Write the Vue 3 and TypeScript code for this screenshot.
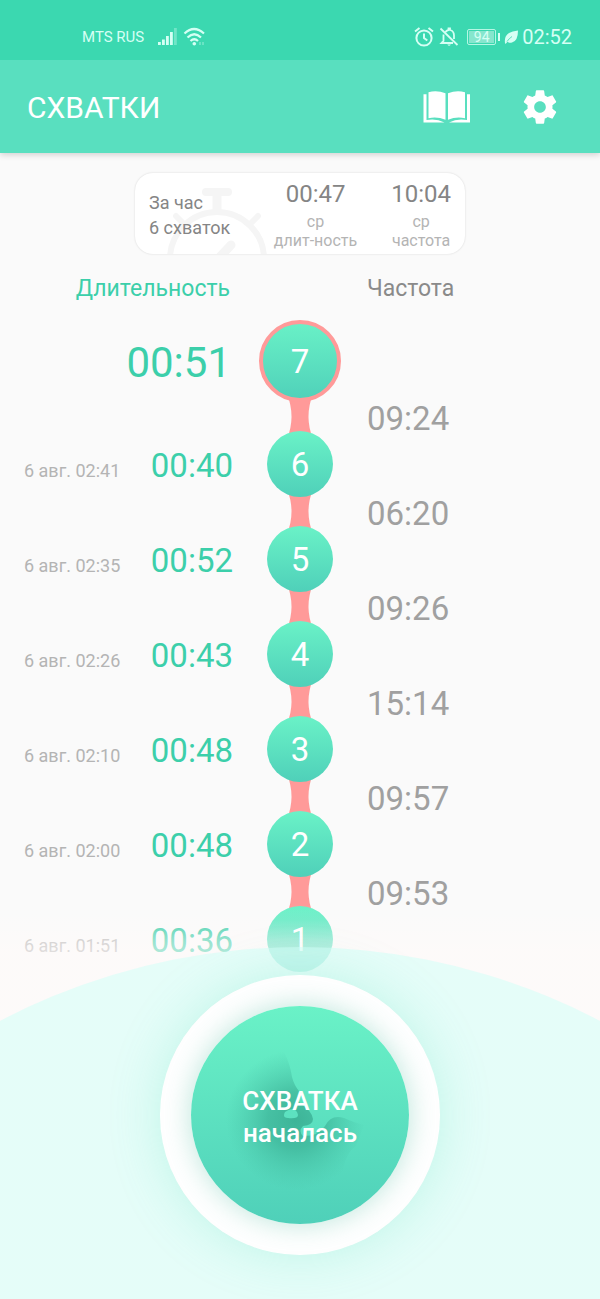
<script setup lang="ts">
interface Contraction {
  id: number
  duration: string
  startedAt?: string
  interval?: string
}

const contractions: Contraction[] = [
  { id: 7, duration: '00:51', interval: '09:24' },
  { id: 6, duration: '00:40', startedAt: '6 авг. 02:41', interval: '06:20' },
  { id: 5, duration: '00:52', startedAt: '6 авг. 02:35', interval: '09:26' },
  { id: 4, duration: '00:43', startedAt: '6 авг. 02:26', interval: '15:14' },
  { id: 3, duration: '00:48', startedAt: '6 авг. 02:10', interval: '09:57' },
  { id: 2, duration: '00:48', startedAt: '6 авг. 02:00', interval: '09:53' },
  { id: 1, duration: '00:36', startedAt: '6 авг. 01:51' },
]
</script>

<template>
  <div class="screen">
    <div class="status">
      <span class="carrier">MTS RUS</span>
      <svg class="signal" width="20" height="20" viewBox="0 0 20 20" fill="#d5fff4">
        <rect x="0" y="15" width="2.8" height="3" />
        <rect x="4" y="12.5" width="2.8" height="5.5" />
        <rect x="8" y="9" width="2.8" height="9" />
        <rect x="12" y="5" width="2.8" height="13" />
        <rect x="16" y="1" width="2.8" height="17" opacity=".35" />
      </svg>
      <svg class="wifi" width="24" height="20" viewBox="0 0 24 20" fill="none" stroke="#d5fff4" stroke-width="2.2">
        <path d="M1.5 6.5Q11 -2.5 21 6.5M4.5 10.5Q11.3 4 18 10.5M7.5 14Q11.3 10.500 15 14" />
        <circle cx="11.3" cy="16.8" r="1.8" fill="#d5fff4" stroke="none" />
        <path d="M17 15v3M20 15v3" stroke-width="1.5" opacity=".4" />
      </svg>
      <svg class="alarm" width="20" height="20" viewBox="0 0 20 20" fill="none" stroke="#d5fff4" stroke-width="2">
        <circle cx="10" cy="11" r="7.6" />
        <path d="M1 4.500L5.500 1M19 4.500L14.500 1M10 6.500V11l3.300 2.500" />
      </svg>
      <svg class="bell" width="20" height="20" viewBox="0 0 20 20" fill="none" stroke="#d5fff4" stroke-width="1.8">
        <path d="M6.500 4.800Q8 3.300 9.500 3V1.500h1.500V3Q15 4 15 8.500V12M4.500 7.500V14L2.500 16H14M1.500 1.500L18.500 18" />
        <path d="M8.300 17.500h3.600q-1.800 2.500-3.600 0z" fill="#d5fff4" stroke="none" />
      </svg>
      <span class="battery"><span class="level">94</span></span>
      <svg class="leaf" width="15" height="16" viewBox="0 0 15 16">
        <path d="M1 14Q0 7 5 4Q8 2.200 14 1.500Q14 12 8 13.500Q5 14.200 3.500 12.800L1.500 15Z" fill="#d5fff4" />
        <path d="M3 12.500Q5 9.500 8 7.500" stroke="#3bd8b0" stroke-width=".8" fill="none" />
      </svg>
      <span class="clock">02:52</span>
    </div>

    <header class="toolbar">
      <h1>СХВАТКИ</h1>
      <button type="button" class="icon-button" aria-label="Справочник">
        <svg width="48" height="32" viewBox="0 0 48 30" preserveAspectRatio="none" fill="#fff">
          <path d="M5.500 1.200Q14-1 22.500 2.200V27Q14 23.500 5.500 25.500Z" />
          <path d="M42 1.200Q33.500-1 25 2.200V27Q33.500 23.500 42 25.500Z" />
          <path d="M.5 3H3.500V27.300Q13 25.500 21.500 29.500H.5Z" />
          <path d="M47 3H44V27.300Q34.500 25.500 26 29.500H47Z" />
        </svg>
      </button>
      <button type="button" class="icon-button" aria-label="Настройки">
        <svg width="40" height="40" viewBox="0 0 24 24" fill="#fff">
          <path d="M19.430 12.980c.04-.32.07-.64.07-.98s-.03-.66-.07-.98l2.110-1.650c.19-.15.24-.42.12-.64l-2-3.460c-.12-.22-.39-.3-.61-.22l-2.490 1c-.52-.4-1.080-.73-1.690-.98l-.38-2.650C14.460 2.180 14.250 2 14 2h-4c-.25 0-.46.18-.49.42l-.38 2.650c-.61.25-1.170.59-1.690.98l-2.490-1c-.23-.09-.49 0-.61.22l-2 3.460c-.13.22-.07.49.12.64l2.110 1.650c-.04.32-.07.65-.07.98s.03.66.07.98l-2.110 1.650c-.19.15-.24.42-.12.64l2 3.460c.12.22.39.3.61.22l2.490-1c.52.4 1.080.73 1.690.98l.38 2.650c.03.24.24.42.49.42h4c.25 0 .46-.18.49-.42l.38-2.650c.61-.25 1.170-.59 1.690-.98l2.490 1c.23.09.49 0 .61-.22l2-3.460c.12-.22.07-.49-.12-.64l-2.110-1.650zM12 15.500c-1.930 0-3.500-1.570-3.500-3.500s1.570-3.500 3.500-3.500 3.500 1.570 3.500 3.500-1.570 3.500-3.500 3.500z" />
        </svg>
      </button>
    </header>

    <main>
      <section class="summary">
        <svg class="stopwatch" width="104" height="70" viewBox="0 0 104 70" fill="none" stroke="#f5f5f5">
          <circle cx="52" cy="75" r="47" stroke-width="6" />
          <path d="M41 8H63" stroke-width="8" stroke-linecap="round" />
          <path d="M52 8V29" stroke-width="9" />
          <path d="M86 39L93 32M18 39L11 32" stroke-width="6" stroke-linecap="round" />
          <path d="M52 76L66 61" stroke-width="9" stroke-linecap="round" />
        </svg>
        <p class="count">За час<br />6 схваток</p>
        <p class="average length"><strong>00:47</strong>ср<br />длит-ность</p>
        <p class="average rate"><strong>10:04</strong>ср<br />частота</p>
      </section>

      <div class="headings">
        <h2 class="heading-length">Длительность</h2>
        <h2 class="heading-rate">Частота</h2>
      </div>

      <ol class="timeline">
        <li v-for="(item, index) in contractions" :key="item.id" class="entry" :class="{ latest: index === 0 }">
          <div class="times">
            <time class="date">{{ item.startedAt }}</time>
            <span class="duration">{{ item.duration }}</span>
          </div>
          <span class="node">{{ item.id }}</span>
          <template v-if="item.interval">
            <svg class="link" width="26" height="45" viewBox="0 0 26 45">
              <path d="M0 0H26Q17 22.500 26 45H0Q9 22.500 0 0Z" fill="#ff9a99" />
            </svg>
            <span class="interval">{{ item.interval }}</span>
          </template>
        </li>
      </ol>
    </main>

    <footer class="dock">
      <svg class="hill" viewBox="0 0 600 394" preserveAspectRatio="xMidYMin slice" aria-hidden="true">
        <defs>
          <linearGradient id="haze" x1="0" y1="0" x2="0" y2="394" gradientUnits="userSpaceOnUse">
            <stop offset="0" stop-color="#fffaf9" stop-opacity="0" />
            <stop offset=".04" stop-color="#fffaf9" stop-opacity=".12" />
            <stop offset=".09" stop-color="#fffaf9" stop-opacity=".45" />
            <stop offset=".12" stop-color="#fffaf9" stop-opacity=".58" />
            <stop offset="1" stop-color="#fffaf9" stop-opacity=".6" />
          </linearGradient>
        </defs>
        <rect x="-600" width="1800" height="394" fill="url(#haze)" />
        <circle cx="300" cy="688" r="645" fill="#d2fff8" fill-opacity=".55" />
      </svg>
      <button type="button" class="start">
        <span class="disc">
          <svg class="baby" viewBox="0 0 218 218" aria-hidden="true">
            <defs>
              <radialGradient id="shade" cx="105" cy="114" r="70" gradientUnits="userSpaceOnUse">
                <stop offset="0" stop-color="#36a98e" stop-opacity=".8" />
                <stop offset=".4" stop-color="#38ac91" stop-opacity=".62" />
                <stop offset="1" stop-color="#46bfa4" stop-opacity="0" />
              </radialGradient>
            </defs>
            <path d="M94 48Q99 58 101 71Q103 79 108 85Q105 91 109 97Q121 105 122 113Q122 119 112 120Q107 125 112 130Q128 130 134 120Q140 108 153 112Q164 117 173 119L165 140Q150 150 151 184H35V44H92ZM94 106Q91 112 97 112Q107 113 107 109Q106 104 102 103Q98 103 94 106Z" fill="url(#shade)" fill-rule="evenodd" />
          </svg>
          <span class="caption">СХВАТКА<br />началась</span>
        </span>
      </button>
    </footer>
  </div>
</template>

<style>
body {
  margin: 0;
  background: #fafafa;
}
</style>

<style scoped>
.screen {
  display: flex;
  flex-direction: column;
  min-height: 100vh;
  overflow: hidden;
  background: #fafafa;
  font-family: Roboto, "Noto Sans", sans-serif;
}

h1,
h2,
p,
ol {
  margin: 0;
  padding: 0;
  font-weight: 400;
}

button {
  padding: 0;
  border: 0;
  font: inherit;
  cursor: pointer;
}

.status {
  position: relative;
  z-index: 1;
  display: flex;
  align-items: center;
  height: 60px;
  padding: 14px 28px 0 82px;
  box-sizing: border-box;
  background: #3bd8b0;
  color: #d5fff4;
}

.carrier {
  font-size: 15px;
}

.signal {
  margin-left: 14px;
}

.wifi {
  margin-left: 5px;
}

.alarm {
  margin-left: auto;
}

.bell {
  margin-left: 5px;
}

.battery {
  position: relative;
  width: 29px;
  height: 16px;
  margin-left: 8px;
  padding: 1px;
  border: 1px solid #b5f7e4;
  border-radius: 2px;
  box-sizing: border-box;
}

.battery::after {
  content: "";
  position: absolute;
  top: 3px;
  right: -5px;
  width: 2px;
  height: 8px;
  background: #d5fff4;
}

.level {
  display: block;
  height: 12px;
  background: #86e6cd;
  font-size: 14px;
  line-height: 13px;
  text-align: center;
}

.leaf {
  margin-left: 8px;
}

.clock {
  margin-left: 3px;
  font-size: 20px;
}

.toolbar {
  display: flex;
  align-items: center;
  height: 93px;
  padding: 0 40px 0 27px;
  box-sizing: border-box;
  background: #59dfbf;
  box-shadow: 0 2px 6px rgba(0, 0, 0, 0.16);
  color: #fff;
}

.toolbar h1 {
  margin-right: auto;
  padding-top: 2px;
  font-size: 30px;
}

.icon-button {
  display: flex;
  margin-left: 49px;
  background: none;
}

.summary {
  position: relative;
  display: flex;
  align-items: center;
  width: 330px;
  height: 81px;
  margin: 20px auto 0;
  padding: 2px 14px 0;
  box-sizing: border-box;
  overflow: hidden;
  border-radius: 18px;
  background: #fff;
  box-shadow: 0 0 2px rgba(0, 0, 0, 0.16);
  color: #858585;
}

.stopwatch {
  position: absolute;
  left: 30px;
  bottom: 0;
}

.count {
  position: relative;
  font-size: 18px;
  line-height: 25px;
  margin-right: auto;
}

.average {
  color: #b4b4b4;
  font-size: 16px;
  line-height: 19px;
  text-align: center;
}

.average strong {
  display: block;
  margin-bottom: 4px;
  color: #858585;
  font-size: 24px;
  font-weight: 400;
  line-height: 28px;
}

.rate {
  margin-left: 34px;
}

.headings,
.entry {
  display: grid;
  grid-template-columns: 1fr 82px 1fr;
}

.headings {
  margin-top: 20px;
}

.headings h2 {
  font-size: 23px;
  line-height: 30px;
}

.headings .heading-length {
  padding-right: 29px;
  color: #3ccfaa;
  text-align: right;
}

.headings .heading-rate {
  grid-column: 3;
  padding-left: 26px;
  color: #8a8a8a;
}

.timeline {
  margin-top: 16px;
  list-style: none;
}

.entry {
  grid-template-rows: 66px 29px;
}

.latest {
  grid-template-rows: 82px 29px;
}

.entry:last-child {
  grid-template-rows: 66px;
}

.times {
  display: flex;
  align-items: baseline;
  align-self: center;
  justify-content: space-between;
  padding: 3px 26px 0 24px;
}

.date {
  color: #b4b4b4;
  font-size: 18px;
}

.duration {
  color: #3ccfaa;
  font-size: 33px;
  line-height: 40px;
}

.latest .duration {
  font-size: 42px;
  padding-right: 2px;
}

.node {
  position: relative;
  z-index: 1;
  display: flex;
  align-items: center;
  justify-content: center;
  justify-self: center;
  width: 66px;
  height: 66px;
  box-sizing: border-box;
  border-radius: 50%;
  background: linear-gradient(#6af2c7, #4fd0b9);
  color: #fff;
  font-size: 33px;
}

.latest .node {
  width: 82px;
  height: 82px;
  border: 4px solid #ff9a99;
  background-origin: border-box;
}

.link {
  grid-column: 2;
  grid-row: 2;
  justify-self: center;
  margin-top: -8px;
}

.interval {
  grid-column: 3;
  grid-row: 2;
  padding-left: 26px;
  color: #a0a0a0;
  font-size: 33px;
  line-height: 34px;
}

.dock {
  position: relative;
  z-index: 2;
  display: flex;
  flex: 1;
  align-items: flex-start;
  justify-content: center;
  margin-top: -68px;
  padding: 71px 0 43px;
}

.hill {
  position: absolute;
  inset: 0;
  width: 100%;
  height: 100%;
}

.start {
  position: relative;
  display: flex;
  align-items: center;
  justify-content: center;
  width: 280px;
  height: 280px;
  border-radius: 50%;
  background: #fff;
  box-shadow: 0 0 50px rgba(79, 222, 187, 0.25);
}

.disc {
  position: relative;
  display: flex;
  align-items: center;
  justify-content: center;
  width: 218px;
  height: 218px;
  border-radius: 50%;
  background: linear-gradient(#6af2c7, #4fd0b9);
  box-shadow: 0 0 28px rgba(60, 180, 150, 0.35);
}

.baby {
  position: absolute;
  inset: 0;
}

.caption {
  position: relative;
  padding-top: 4px;
  color: #fff;
  font-size: 26px;
  font-weight: 500;
  line-height: 32px;
}
</style>
